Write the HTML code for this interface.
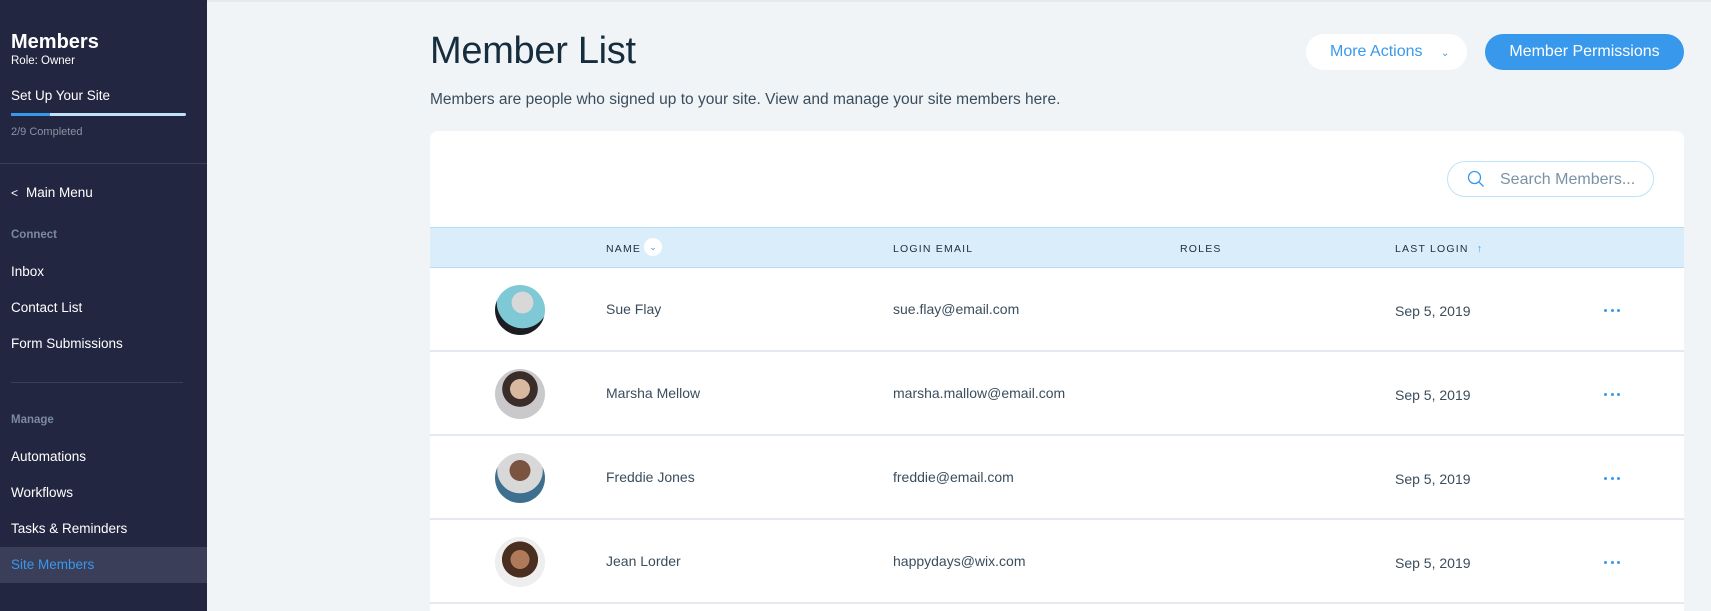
<!DOCTYPE html>
<html><head><meta charset="utf-8"><style>
*{box-sizing:border-box;margin:0;padding:0}
html,body{width:1711px;height:611px;overflow:hidden}
body{background:#f0f4f7;font-family:"Liberation Sans",sans-serif;position:relative}
.sb{position:absolute;left:0;top:0;width:207px;height:611px;background:#232640;color:#fff}
.a{position:absolute;left:11px;white-space:nowrap;line-height:1}
.main{position:absolute}
.card{position:absolute;left:430px;top:131px;width:1254px;height:480px;background:#fff;border-radius:8px 8px 0 0;overflow:hidden}
.hdr{position:absolute;left:0;top:96px;width:100%;height:41px;background:#d9edfb;border-top:1px solid #b8dcf6;border-bottom:1px solid #b8dcf6}
.hdr span{position:absolute;top:15px;font-size:10.5px;letter-spacing:1.2px;color:#20303c}
.row{position:absolute;left:0;width:100%;height:84px;border-bottom:2px solid #e3e9ee;font-size:14px;color:#3b4d5c}
.row span{position:absolute}
.av{position:absolute;left:65px;top:17px;width:50px;height:50px;border-radius:50%}
.dots{position:absolute;left:1174px;top:41px;width:16px;height:3px;display:flex;justify-content:space-between}
.dots i{width:3px;height:3px;border-radius:50%;background:#3899ec}
</style></head><body>
<div class="sb">
<div class="a" style="top:32px;font-size:20px;font-weight:bold">Members</div>
<div class="a" style="top:56px;font-size:11.5px">Role: Owner</div>
<div class="a" style="top:89px;font-size:13.5px">Set Up Your Site</div>
<div style="position:absolute;left:11px;top:113px;width:175px;height:3px;background:#bfe2fb;border-radius:2px"><div style="width:39px;height:3px;background:#3899ec"></div></div>
<div class="a" style="top:127px;font-size:11px;color:#8a93a6">2/9 Completed</div>
<div style="position:absolute;left:0;top:163px;width:207px;height:1px;background:#3a3e58"></div>
<div class="a" style="top:186px;font-size:13.5px"><span style="font-size:12px;margin-right:8px">&lt;</span>Main Menu</div>
<div class="a" style="top:230px;font-size:11.5px;font-weight:bold;color:#7a8aa0">Connect</div>
<div class="a" style="top:265px;font-size:13.5px">Inbox</div>
<div class="a" style="top:301px;font-size:13.5px">Contact List</div>
<div class="a" style="top:337px;font-size:13.5px">Form Submissions</div>
<div style="position:absolute;left:11px;top:382px;width:172px;height:1px;background:#3a3e58"></div>
<div class="a" style="top:415px;font-size:11.5px;font-weight:bold;color:#7a8aa0">Manage</div>
<div class="a" style="top:450px;font-size:13.5px">Automations</div>
<div class="a" style="top:486px;font-size:13.5px">Workflows</div>
<div class="a" style="top:522px;font-size:13.5px">Tasks &amp; Reminders</div>
<div style="position:absolute;left:0;top:547px;width:207px;height:36px;background:#3a3e59"></div>
<div class="a" style="top:558px;font-size:13.5px;color:#3899ec">Site Members</div>
</div>
<div style="position:absolute;left:207px;top:0;right:0;height:2px;background:#e6eaee"></div>
<div class="main" style="left:430px;top:30px;font-size:38px;color:#162d3d;font-weight:500;letter-spacing:-0.3px">Member List</div>
<div class="main" style="left:430px;top:91px;font-size:15.5px;color:#3b4d5c">Members are people who signed up to your site. View and manage your site members here.</div>
<div class="main" style="left:1306px;top:34px;width:161px;height:36px;background:#fff;border-radius:18px;color:#3899ec;font-size:16px;line-height:36px;padding-left:24px">More Actions <span style="font-size:10px;margin-left:14px">&#8964;</span></div>
<div class="main" style="left:1485px;top:34px;width:199px;height:36px;background:#3899ec;border-radius:18px;color:#fff;font-size:16px;line-height:36px;text-align:center">Member Permissions</div>
<div class="card">
<div style="position:absolute;left:1017px;top:30px;width:207px;height:36px;border:1px solid #bfe2fb;border-radius:18px">
<svg style="position:absolute;left:19px;top:8px" width="18" height="18" viewBox="0 0 18 18"><circle cx="7.5" cy="7.5" r="6" fill="none" stroke="#3899ec" stroke-width="1.3"/><path d="M12 12l4.5 4.5" stroke="#3899ec" stroke-width="1.3"/></svg>
<span style="position:absolute;left:52px;top:9px;font-size:16px;color:#7a92a5">Search Members...</span></div>
<div class="hdr">
<span style="left:176px">NAME</span>
<span style="left:214px;top:10px;width:18px;height:18px;border-radius:50%;background:#fff;color:#3899ec;font-size:9px;text-align:center;line-height:18px;letter-spacing:0">&#8964;</span>
<span style="left:463px">LOGIN EMAIL</span>
<span style="left:750px">ROLES</span>
<span style="left:965px">LAST LOGIN <b style="color:#3899ec;margin-left:4px">&#8593;</b></span>
</div>
<div class="row" style="top:137px"><div class="av" style="background:radial-gradient(circle at 55% 35%,#d8d8d8 0 25%,#7fc8d6 26% 60%,#1c1c22 61%)"></div><span style="left:176px;top:33px">Sue Flay</span><span style="left:463px;top:33px">sue.flay@email.com</span><span style="left:965px;top:35px">Sep 5, 2019</span><div class="dots"><i></i><i></i><i></i></div></div>
<div class="row" style="top:221px"><div class="av" style="background:radial-gradient(circle at 50% 40%,#d9b8a0 0 25%,#3a2c28 26% 45%,#c9c9cc 46%)"></div><span style="left:176px;top:33px">Marsha Mellow</span><span style="left:463px;top:33px">marsha.mallow@email.com</span><span style="left:965px;top:35px">Sep 5, 2019</span><div class="dots"><i></i><i></i><i></i></div></div>
<div class="row" style="top:305px"><div class="av" style="background:radial-gradient(circle at 50% 35%,#7a5440 0 25%,#d8d8d8 26% 55%,#3f6f8e 56%)"></div><span style="left:176px;top:33px">Freddie Jones</span><span style="left:463px;top:33px">freddie@email.com</span><span style="left:965px;top:35px">Sep 5, 2019</span><div class="dots"><i></i><i></i><i></i></div></div>
<div class="row" style="top:389px"><div class="av" style="background:radial-gradient(circle at 50% 45%,#b07a5a 0 25%,#4a2e20 26% 48%,#eeeeee 49%)"></div><span style="left:176px;top:33px">Jean Lorder</span><span style="left:463px;top:33px">happydays@wix.com</span><span style="left:965px;top:35px">Sep 5, 2019</span><div class="dots"><i></i><i></i><i></i></div></div>
</div>
</body></html>
